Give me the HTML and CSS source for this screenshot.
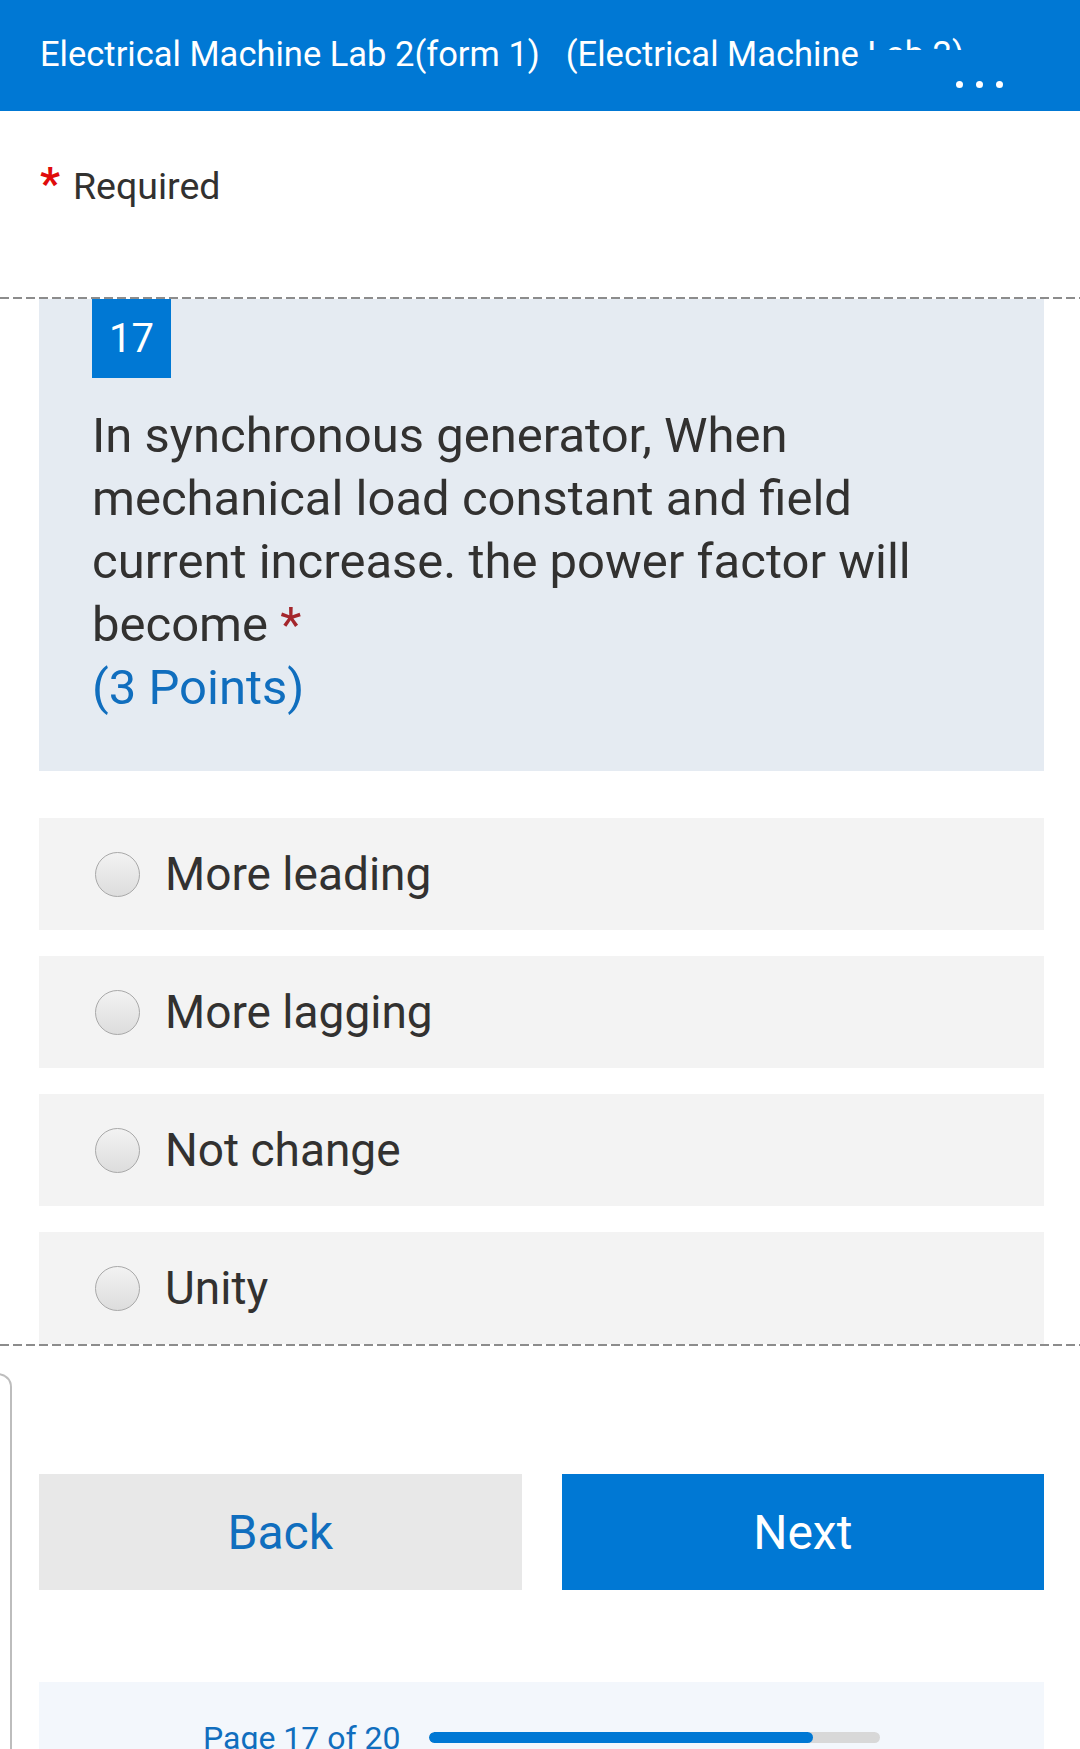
FILE: index.html
```html
<!DOCTYPE html>
<html lang="en">
<head>
<meta charset="utf-8">
<title>Electrical Machine Lab 2(form 1)</title>
<link rel="stylesheet" href="styles.css">
</head>
<body>
<header class="topbar">
  <div class="title"><span>Electrical Machine Lab 2(form 1)</span><span>(Electrical Machine Lab 2)</span></div>
  <div class="more" aria-label="More options"><i></i><i></i><i></i></div>
</header>

<div class="required"><span class="req-star">*</span><span class="req-text">Required</span></div>

<div class="dash"></div>
<section class="question">
  <div class="qcard">
    <div class="qnum">17</div>
    <div class="qtext">In synchronous generator, When mechanical load constant and field current increase. the power factor will become <span class="qstar">*</span></div>
    <div class="qpoints">(3 Points)</div>
  </div>
  <div class="options">
    <label class="option"><span class="radio"></span><span class="otext">More leading</span></label>
    <label class="option"><span class="radio"></span><span class="otext">More lagging</span></label>
    <label class="option"><span class="radio"></span><span class="otext">Not change</span></label>
    <label class="option"><span class="radio"></span><span class="otext">Unity</span></label>
  </div>
</section>
<div class="dash"></div>

<div class="lower">
  <div class="buttons">
    <button class="btn btn-back">Back</button>
    <button class="btn btn-next">Next</button>
  </div>
  <div class="progress-panel">
    <span class="page-label">Page 17 of 20</span>
    <div class="track"><div class="fill" style="width:85%"></div></div>
  </div>
</div>
</body>
</html>
```

FILE: styles.css
```css
* { box-sizing: border-box; }
html, body { margin: 0; padding: 0; }
body {
  width: 1080px;
  height: 1749px;
  overflow: hidden;
  background: #ffffff;
  font-family: Roboto, "Noto Sans", "Liberation Sans", sans-serif;
  color: #323130;
}

.topbar {
  position: relative;
  height: 111px;
  background: #0078d4;
  color: #ffffff;
  padding: 32px 0 0 40px;
}
.title {
  display: flex;
  gap: 26px;
  white-space: nowrap;
  overflow: hidden;
  font-size: 34.5px;
  line-height: 44px;
}
.more {
  position: absolute;
  right: 0;
  top: 50px;
  width: 212px;
  height: 61px;
  background: #0078d4;
  display: flex;
  justify-content: flex-end;
  align-items: center;
  gap: 13px;
  padding-right: 77px;
  padding-top: 8px;
}
.more i {
  display: block;
  width: 7px;
  height: 7px;
  border-radius: 50%;
  background: #ffffff;
}

.required {
  margin: 51px 0 87px 40px;
  height: 48px;
  display: flex;
  align-items: flex-start;
  gap: 13px;
}
.req-star {
  color: #e00b0b;
  font-size: 44px;
  line-height: 48px;
  font-weight: 700;
  margin-top: -2px;
}
.req-text {
  font-size: 37.5px;
  line-height: 48px;
  color: #323130;
}

.dash {
  height: 2px;
  background: repeating-linear-gradient(90deg, #8c8c8c 0 9px, transparent 9px 13px);
}

.question {
  padding: 0 36px 0 39px;
}
.qcard {
  background: #e5ebf2;
  padding: 0 94px 52px 53px;
}
.qnum {
  width: 79px;
  height: 79px;
  background: #0078d4;
  color: #ffffff;
  font-size: 40px;
  display: flex;
  align-items: center;
  justify-content: center;
}
.qtext {
  margin-top: 26px;
  font-size: 49px;
  line-height: 63px;
  color: #323130;
}
.qstar { color: #a4262c; }
.qpoints {
  font-size: 49px;
  line-height: 63px;
  color: #106ebe;
}

.options {
  margin-top: 47px;
  display: flex;
  flex-direction: column;
  gap: 26px;
}
.option {
  height: 112px;
  background: #f3f3f3;
  display: flex;
  align-items: center;
  padding-left: 56px;
  gap: 25px;
}
.radio {
  width: 45px;
  height: 45px;
  border-radius: 50%;
  border: 1px solid #a8a8a8;
  background: linear-gradient(180deg, #f2f2f2 0%, #dddddd 100%);
  flex: none;
}
.otext {
  font-size: 46px;
  line-height: 56px;
  color: #323130;
}

.lower {
  position: relative;
  padding: 128px 36px 0 39px;
}
.lower::before {
  content: "";
  position: absolute;
  left: -40px;
  top: 27px;
  width: 50px;
  height: 600px;
  border-top: 2px solid #bdbdbd;
  border-right: 2px solid #bdbdbd;
  border-top-right-radius: 14px;
}
.buttons {
  display: grid;
  grid-template-columns: 1fr 1fr;
  gap: 40px;
}
.btn {
  height: 116px;
  border: none;
  font-family: Roboto, "Noto Sans", "Liberation Sans", sans-serif;
  font-size: 48px;
  cursor: pointer;
}
.btn-back { background: #e8e8e8; color: #106ebe; }
.btn-next { background: #0078d4; color: #ffffff; }

.progress-panel {
  margin-top: 92px;
  background: #f3f7fc;
  height: 200px;
  padding: 36px 0 0 164px;
  display: flex;
  align-items: flex-start;
  gap: 29px;
}
.page-label {
  font-size: 32px;
  line-height: 40px;
  color: #106ebe;
  white-space: nowrap;
}
.track {
  margin-top: 14px;
  width: 451px;
  height: 11px;
  border-radius: 6px;
  background: #d8d8d8;
  overflow: hidden;
}
.fill {
  height: 100%;
  background: #0078d4;
  border-radius: 6px;
}
```
